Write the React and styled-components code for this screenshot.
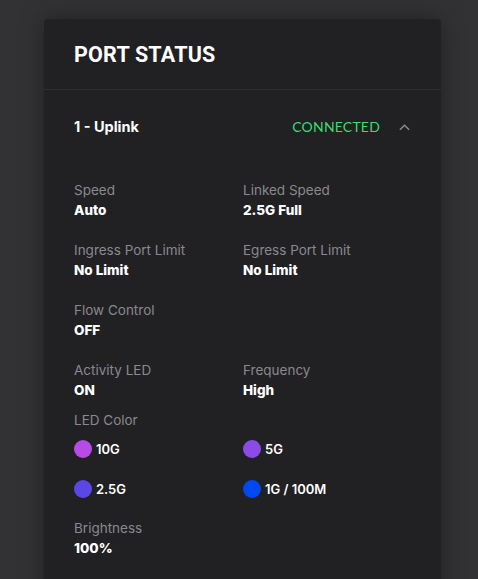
import styled, { createGlobalStyle } from "styled-components";

const GlobalStyle = createGlobalStyle`
  html, body {
    margin: 0;
    padding: 0;
    background-color: #323134;
    font-family: "Inter", "Noto Sans", sans-serif;
    -webkit-font-smoothing: antialiased;
  }
`;

const Page = styled.div`
  height: 579px;
  overflow: hidden;
  padding: 19px 37px 0 44px;
`;

const Card = styled.section`
  width: 397px;
  min-height: 600px;
  background-color: #212023;
  border-radius: 4px 4px 0 0;
  box-shadow: 0 0 24px rgba(0, 0, 0, 0.35);
`;

const Header = styled.header`
  height: 70px;
  padding: 0 30px;
  display: flex;
  align-items: center;
  border-bottom: 1px solid #2e2d31;
`;

const Title = styled.h1`
  margin: 0;
  font-family: "Roboto", sans-serif;
  font-weight: 700;
  font-size: 21.5px;
  color: #fff;
  letter-spacing: 0.2px;
`;

const PortRow = styled.div`
  display: flex;
  align-items: center;
  padding: 27px 30px 25px;
  line-height: 20px;
`;

const PortName = styled.div`
  flex: 1;
  font-weight: 700;
  font-size: 14.5px;
  color: #fff;
`;

const Status = styled.span`
  font-family: "Lato", sans-serif;
  font-size: 14px;
  color: #3ddc70;
  letter-spacing: 0.2px;
`;

const Chevron = styled.svg`
  margin-left: 18px;
  width: 13px;
  height: 13px;
  color: #8a898e;
`;

const Details = styled.div`
  padding: 19px 30px 0;
  display: flex;
  flex-direction: column;
`;

const FieldGrid = styled.div`
  display: grid;
  grid-template-columns: 169px 1fr;
  row-gap: ${(p) => p.$gap}px;
  margin-top: ${(p) => p.$top || 0}px;
`;

const Field = styled.div`
  display: flex;
  flex-direction: column;
`;

const Label = styled.span`
  font-size: 13.5px;
  line-height: 18px;
  color: #8a898e;
`;

const Value = styled.span`
  font-size: 13.5px;
  font-weight: 800;
  line-height: 22px;
  color: #fff;
`;

const LedItem = styled.div`
  display: flex;
  align-items: center;
  gap: 4px;
  font-size: 13px;
  font-weight: 600;
  color: #fff;
  line-height: 18px;
`;

const Dot = styled.span`
  width: 18px;
  height: 18px;
  border-radius: 50%;
  background-color: ${(p) => p.$color};
`;

const fields = [
  ["Speed", "Auto"],
  ["Linked Speed", "2.5G Full"],
  ["Ingress Port Limit", "No Limit"],
  ["Egress Port Limit", "No Limit"],
  ["Flow Control", "OFF"],
  null,
  ["Activity LED", "ON"],
  ["Frequency", "High"],
];

const leds = [
  ["10G", "#b84ae6"],
  ["5G", "#8b4be6"],
  ["2.5G", "#5c47e6"],
  ["1G / 100M", "#0048f0"],
];

export default function App() {
  return (
    <>
      <GlobalStyle />
      <Page>
        <Card>
          <Header>
            <Title>PORT STATUS</Title>
          </Header>
          <PortRow>
            <PortName>1 - Uplink</PortName>
            <Status>CONNECTED</Status>
            <Chevron viewBox="0 0 14 14" fill="none">
              <path d="M2 9.5 L7 4.5 L12 9.5" stroke="currentColor" strokeWidth="1.6" />
            </Chevron>
          </PortRow>
          <Details>
            <FieldGrid $gap={20}>
              {fields.map((f, i) =>
                f ? (
                  <Field key={i}>
                    <Label>{f[0]}</Label>
                    <Value>{f[1]}</Value>
                  </Field>
                ) : (
                  <div key={i} />
                )
              )}
            </FieldGrid>
            <FieldGrid $gap={0} $top={10}>
              <Label>LED Color</Label>
            </FieldGrid>
            <FieldGrid $gap={22} $top={11}>
              {leds.map(([name, color]) => (
                <LedItem key={name}>
                  <Dot $color={color} />
                  {name}
                </LedItem>
              ))}
            </FieldGrid>
            <FieldGrid $gap={0} $top={21}>
              <Field>
                <Label>Brightness</Label>
                <Value>100%</Value>
              </Field>
            </FieldGrid>
          </Details>
        </Card>
      </Page>
    </>
  );
}
